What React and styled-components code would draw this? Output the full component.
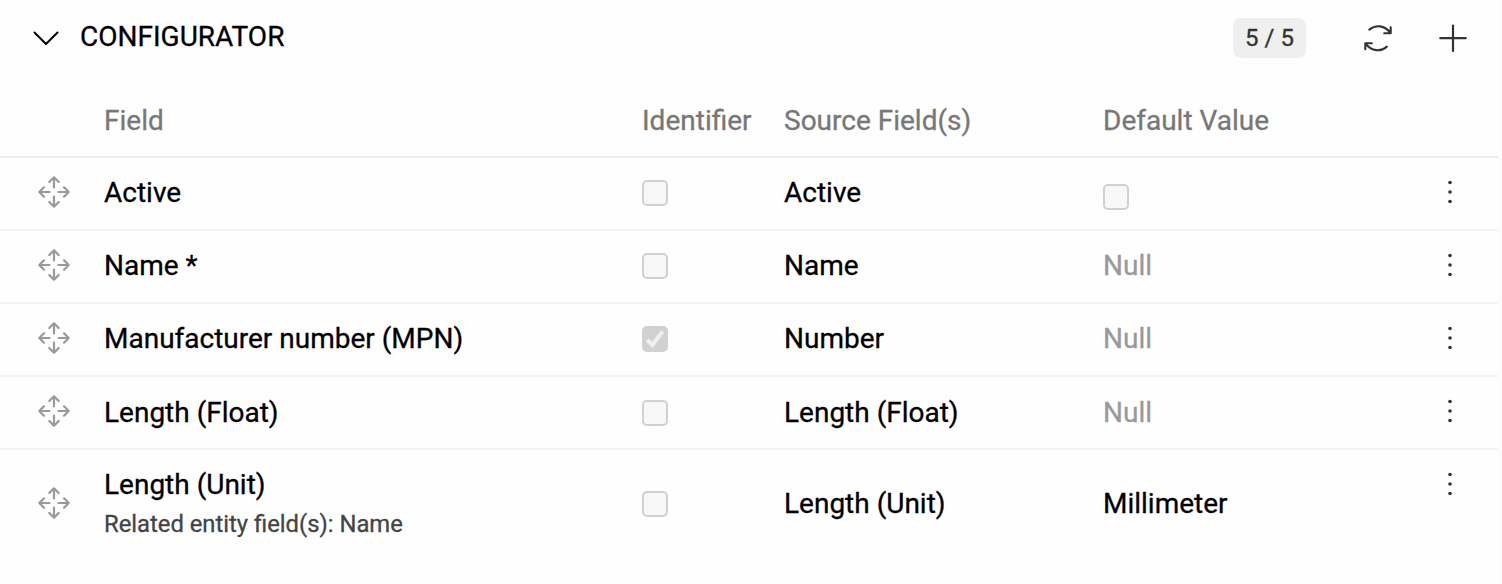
import styled, { createGlobalStyle } from "styled-components";

const Colors = {
  text: "#000000",
  icon: "#333333",
  heading: "#777777",
  muted: "#999999",
  sub: "#444444",
  line: "#f2f3f3",
  headLine: "#e8ecec",
  boxBorder: "#d1d1d1",
  boxFill: "#f8f8f8",
  badge: "#efefef",
};

const GlobalStyle = createGlobalStyle`
  * {
    box-sizing: border-box;
  }

  body {
    margin: 0;
    background: #fcfcfc;
    font-family: Roboto, "Liberation Sans", sans-serif;
  }
`;

const Panel = styled.section`
  width: 1498px;
  height: 584px;
  background: #fefefe;
  color: ${Colors.text};
  font-size: 28px;
  line-height: 32px;
  -webkit-text-stroke: 0.3px;
`;

const Header = styled.header`
  display: flex;
  align-items: center;
  height: 76px;
  padding: 0 30px 0 32px;
`;

const Title = styled.h1`
  flex: 1;
  margin: 0 0 2px 20px;
  font-size: 28px;
  font-weight: 400;
`;

const Badge = styled.span`
  width: 73px;
  height: 40px;
  margin-right: 57px;
  border-radius: 8px;
  background: ${Colors.badge};
  color: ${Colors.icon};
  font-size: 24px;
  line-height: 40px;
  text-align: center;
`;

const IconButton = styled.button`
  display: flex;
  padding: 0;
  border: 0;
  background: none;
  color: ${Colors.icon};

  & + & {
    margin-left: 43px;
  }
`;

const Row = styled.div`
  display: grid;
  grid-template-columns: 104px 538px 142px 319px 1fr 96px;
  align-items: center;
  height: ${(props) => (props.$tall ? "108px" : "73px")};
  padding-bottom: ${(props) => (props.$tall ? 0 : "2px")};
  border-bottom: ${(props) => (props.$last ? "none" : `2px solid ${Colors.line}`)};
`;

const HeadRow = styled(Row)`
  height: 82px;
  padding: 10px 0 0;
  border-bottom-color: ${Colors.headLine};
  color: ${Colors.heading};
`;

const Cell = styled.div`
  padding-top: ${(props) => props.$top || 0}px;
  color: ${(props) => (props.$muted ? Colors.muted : "inherit")};
  white-space: nowrap;
`;

const Handle = styled.div`
  display: flex;
  padding: 0 0 2px 37px;
  color: ${Colors.muted};
`;

const Sub = styled.div`
  margin: 9px 0 2px;
  color: ${Colors.sub};
  font-size: 23.8px;
  line-height: 28px;
`;

const Box = styled.span`
  display: flex;
  width: 26px;
  height: 26px;
  border: 2px solid ${Colors.boxBorder};
  border-radius: 5px;
  background: ${(props) => (props.$checked ? Colors.boxBorder : Colors.boxFill)};
`;

const Menu = styled.button`
  display: flex;
  align-self: ${(props) => (props.$tall ? "start" : "center")};
  justify-content: center;
  padding: ${(props) => (props.$tall ? "20px 0 0" : "0 0 2px")};
  border: 0;
  background: none;
  color: ${Colors.icon};
`;

const ChevronIcon = () => (
  <svg width="28" height="28" viewBox="0 0 28 28" fill="none" stroke="#000" strokeWidth="2" strokeLinecap="round" strokeLinejoin="round">
    <path d="M2.5 8.5 14 20 25.5 8.5" />
  </svg>
);

const RefreshIcon = () => (
  <svg width="32" height="32" viewBox="0 0 32 32" fill="none" stroke="currentColor" strokeWidth="2.1" strokeLinecap="round" strokeLinejoin="round">
    <path d="M6.3 7.6C12.5 2.6 22 2.8 27.3 11M27.7 5.3v6h-6.5" />
    <path d="M23.8 24.6C18 29.8 8.5 29.8 2.7 21.6M2.3 27.2v-5.9h6.6" />
  </svg>
);

const PlusIcon = () => (
  <svg width="30" height="30" viewBox="0 0 30 30" fill="none" stroke="currentColor" strokeWidth="2.2" strokeLinecap="round">
    <path d="M15 2.5v25.4M2.3 15.2h25.4" />
  </svg>
);

const MoveIcon = () => (
  <svg width="34" height="34" viewBox="0 0 34 34" fill="none" stroke="currentColor" strokeWidth="2.2" strokeLinecap="round" strokeLinejoin="round">
    <path d="M17 12.5V2.8M12.3 7 17 2.3 21.7 7" />
    <path d="M17 21.5v9.7M12.3 27l4.7 4.7 4.7-4.7" />
    <path d="M12.5 17H2.8M7 12.3 2.3 17 7 21.7" />
    <path d="M21.5 17h9.7M27 12.3l4.7 4.7-4.7 4.7" />
  </svg>
);

const DotsIcon = () => (
  <svg width="8" height="28" viewBox="0 0 8 28" fill="currentColor">
    <circle cx="4" cy="4.5" r="1.8" />
    <circle cx="4" cy="14" r="1.8" />
    <circle cx="4" cy="23.5" r="1.8" />
  </svg>
);

const Checkbox = ({ checked }) => (
  <Box $checked={checked} role="checkbox" aria-checked={!!checked} aria-disabled="true">
    {checked && (
      <svg width="22" height="22" viewBox="0 0 22 22" fill="none" stroke="#f0f0f0" strokeWidth="4">
        <path d="M3.2 12 8.4 17 18.6 3.4" />
      </svg>
    )}
  </Box>
);

const fields = [
  { name: "Active", source: "Active", checkboxValue: true },
  { name: "Name *", source: "Name" },
  { name: "Manufacturer number (MPN)", source: "Number", identifier: true },
  { name: "Length (Float)", source: "Length (Float)", top: 2 },
  {
    name: "Length (Unit)",
    sub: "Related entity field(s): Name",
    source: "Length (Unit)",
    value: "Millimeter",
  },
];

const FieldRow = ({ field, last }) => {
  const { name, sub, source, identifier, checkboxValue, value, top } = field;

  return (
    <Row $tall={!!sub} $last={last}>
      <Handle>
        <MoveIcon />
      </Handle>
      <Cell $top={top}>
        {name}
        {sub && <Sub>{sub}</Sub>}
      </Cell>
      <Cell $top={top}>
        <Checkbox checked={identifier} />
      </Cell>
      <Cell $top={top}>{source}</Cell>
      {checkboxValue ? (
        <Cell $top={8}>
          <Checkbox />
        </Cell>
      ) : (
        <Cell $top={top} $muted={!value}>{value || "Null"}</Cell>
      )}
      <Menu $tall={!!sub} aria-label="Menu">
        <DotsIcon />
      </Menu>
    </Row>
  );
};

const App = () => (
  <>
    <GlobalStyle />
    <Panel>
      <Header>
        <ChevronIcon />
        <Title>CONFIGURATOR</Title>
        <Badge>5 / 5</Badge>
        <IconButton aria-label="Refresh">
          <RefreshIcon />
        </IconButton>
        <IconButton aria-label="Add">
          <PlusIcon />
        </IconButton>
      </Header>
      <HeadRow>
        <Cell />
        <Cell>Field</Cell>
        <Cell>Identifier</Cell>
        <Cell>Source Field(s)</Cell>
        <Cell>Default Value</Cell>
      </HeadRow>
      {fields.map((field, i) => (
        <FieldRow key={field.name} field={field} last={i === fields.length - 1} />
      ))}
    </Panel>
  </>
);

export default App;
